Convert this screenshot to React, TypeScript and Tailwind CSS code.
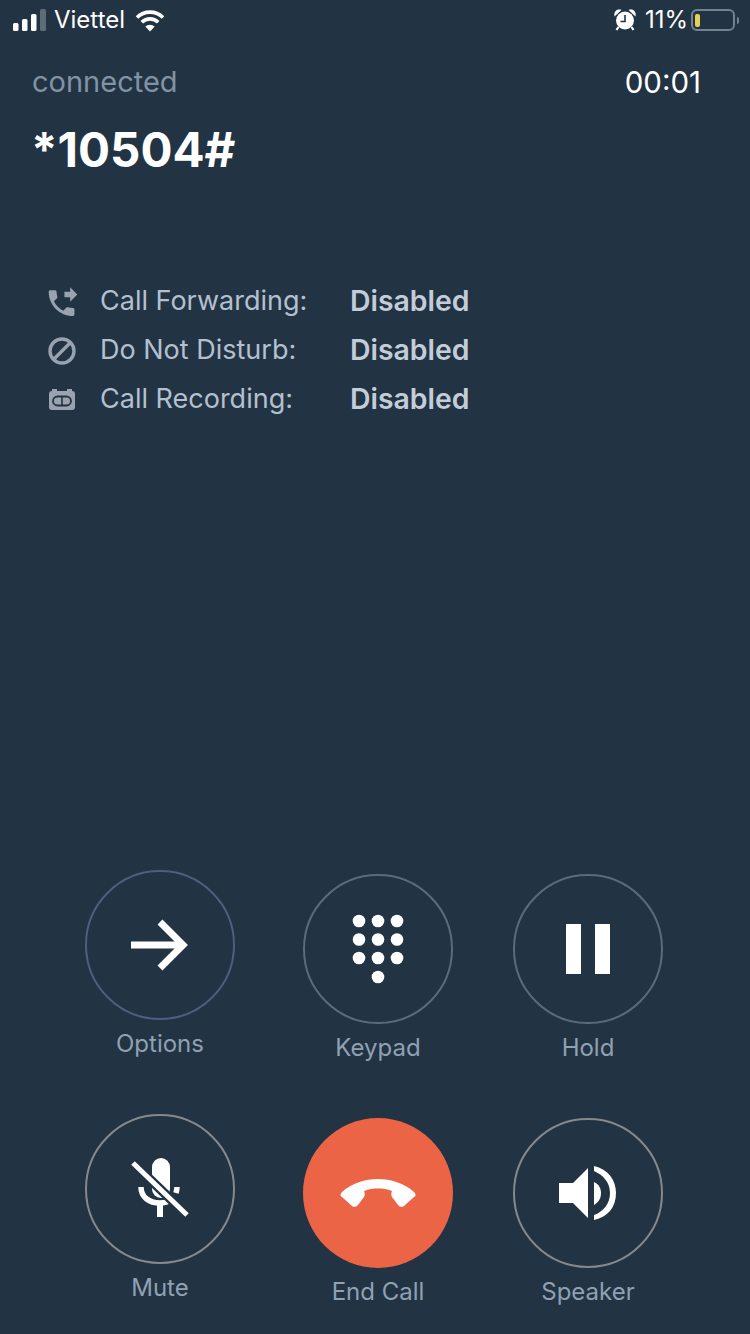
import React from 'react';

const SignalIcon = () => (
  <svg width="34" height="22" viewBox="0 0 34 22" className="shrink-0">
    <rect x="0" y="14" width="5.5" height="8" rx="1.5" fill="#fff" />
    <rect x="9" y="10" width="5.5" height="12" rx="1.5" fill="#fff" />
    <rect x="18" y="5" width="5.5" height="17" rx="1.5" fill="#fff" />
    <rect x="27" y="0" width="6" height="22" rx="1.5" fill="#5e6b78" />
  </svg>
);

const WifiIcon = () => (
  <svg width="30" height="23" viewBox="0 0 30 23" fill="none" className="shrink-0">
    <path d="M2 8.5A18.5 18.5 0 0 1 28 8.5" stroke="#fff" strokeWidth="3.6" />
    <path d="M6.8 13.2A11.8 11.8 0 0 1 23.2 13.2" stroke="#fff" strokeWidth="3.6" />
    <path d="M10.3 17.6A6.8 6.8 0 0 1 19.7 17.6L15 22.5Z" fill="#fff" />
  </svg>
);

const AlarmIcon = () => (
  <svg width="22" height="22" viewBox="0 0 22 22" fill="none" className="shrink-0">
    <path d="M0.5 7.5C-0.5 2.5 3 -0.5 7.5 1Z" fill="#fff" />
    <path d="M21.5 7.5C22.5 2.5 19 -0.5 14.5 1Z" fill="#fff" />
    <path d="M4.5 18L2.5 21M17.5 18L19.5 21" stroke="#fff" strokeWidth="2.2" />
    <circle cx="11" cy="11.5" r="9" fill="#fff" />
    <path d="M11 6V12.5H6.5" stroke="#223343" strokeWidth="1.6" />
  </svg>
);

const BatteryIcon = () => (
  <div className="flex items-center gap-[2px]">
    <div className="flex h-[22px] w-[44px] items-center rounded-[6px] border-2 border-[#75838f] pl-[2px]">
      <div className="h-[13px] w-[5px] rounded-[2px] bg-[#e8cf58]" />
    </div>
    <div className="h-[7px] w-[2px] rounded-r-sm bg-[#75838f]" />
  </div>
);

const ForwardIcon = () => (
  <svg width="30" height="30" viewBox="2.5 1 21 20.5" fill="#98a3af" className="ml-px shrink-0">
    <path d="M18 11l5-5-5-5v3h-4v4h4v3zm2 4.5c-1.25 0-2.45-.2-3.57-.57-.35-.11-.74-.03-1.02.24l-2.2 2.2c-2.83-1.44-5.14-3.75-6.59-6.58l2.2-2.21c.28-.27.36-.66.25-1.01C8.7 6.45 8.5 5.25 8.5 4c0-.55-.45-1-1-1H4c-.55 0-1 .45-1 1 0 9.39 7.61 17 17 17 .55 0 1-.45 1-1v-3.5c0-.55-.45-1-1-1z" />
  </svg>
);

const BlockIcon = () => (
  <svg width="30" height="30" viewBox="0 0 30 30" fill="none" stroke="#98a3af" strokeWidth="3.4" className="shrink-0">
    <circle cx="15" cy="15" r="12" />
    <path d="M7 23L23 7" />
  </svg>
);

const RecordIcon = () => (
  <svg width="30" height="24" viewBox="0 0 30 24" className="shrink-0">
    <path d="M5 1h5v4H5zM20 1h5v4h-5z" fill="#98a3af" />
    <rect x="2" y="3" width="26" height="19" rx="3" fill="#98a3af" />
    <rect x="6" y="8.5" width="18" height="9" rx="4.5" fill="none" stroke="#223343" strokeWidth="1.8" />
    <path d="M15 8.5v9" stroke="#223343" strokeWidth="1.6" />
  </svg>
);

const ArrowIcon = () => (
  <svg width="60" height="56" viewBox="0 0 60 56" fill="none" stroke="#fff" strokeWidth="7">
    <path d="M1 28H54" />
    <path d="M30 5L53 28L30 51" />
  </svg>
);

const KeypadIcon = () => (
  <svg width="52" height="70" viewBox="0 0 52 70" fill="#fff">
    {[7, 25.5, 44].map((cy) =>
      [7, 26, 45].map((cx) => <circle key={`${cx}-${cy}`} cx={cx} cy={cy} r="6.3" />)
    )}
    <circle cx="26" cy="63" r="6.3" />
  </svg>
);

const PauseIcon = () => (
  <div className="flex gap-[14px]">
    <div className="h-[50px] w-[15px] bg-white" />
    <div className="h-[50px] w-[15px] bg-white" />
  </div>
);

const MuteIcon = () => (
  <svg width="60" height="64" viewBox="0 0 60 64" fill="none">
    <path d="M22 10a9 9 0 0 1 18 0V32a9 9 0 0 1-18 0Z" fill="#fff" />
    <path d="M11 30C11 40 19 46 30 46C34 46 38 45 41 43" stroke="#fff" strokeWidth="5.5" />
    <path d="M47 30C47 32 46.5 34 46 36" stroke="#fff" strokeWidth="5.5" />
    <path d="M27 46H33V60H27Z" fill="#fff" />
    <path d="M3 6L57 58" stroke="#223343" strokeWidth="9.5" />
    <path d="M3 6L57 58" stroke="#fff" strokeWidth="5" />
  </svg>
);

const HangupIcon = () => (
  <svg width="76" height="28" viewBox="0 0 76 28" fill="#fff">
    <path d="M2 13C12 4 25 0 38 0C51 0 64 4 74 13C76 15 76 17 74 18L64 27C62 28.5 60 28 58 26L52 18C51 16 51 14 52 12C47 10 43 9.5 38 9.5C33 9.5 29 10 24 12C25 14 25 16 24 18L18 26C16 28 14 28.5 12 27L2 18C0 17 0 15 2 13Z" />
  </svg>
);

const SpeakerIcon = () => (
  <svg width="60" height="56" viewBox="0 0 60 56" fill="#fff">
    <path d="M1 18H15L30 3V53L15 38H1Z" />
    <path d="M36 17C41 19 43 24 43 28C43 33 41 37 36 40Z" />
    <path d="M36 1C50 4 58 15 58 28C58 42 50 52 36 55V50C45 47 52 39 52 28C52 17 45 10 36 6Z" />
  </svg>
);

const infoRows = [
  { icon: <ForwardIcon />, label: 'Call Forwarding:' },
  { icon: <BlockIcon />, label: 'Do Not Disturb:' },
  { icon: <RecordIcon />, label: 'Call Recording:' },
];

const CallButton: React.FC<{ label: string; circle: string; className?: string; children: React.ReactNode }> = ({
  label,
  circle,
  className = '',
  children,
}) => (
  <div className={`flex w-[150px] flex-col items-center ${className}`}>
    <div className={`flex h-[150px] w-[150px] items-center justify-center rounded-full ${circle}`}>{children}</div>
    <span className="mt-2 text-[24px] leading-8 text-[#8fa1b3]">{label}</span>
  </div>
);

const App: React.FC = () => {
  return (
    <div className="flex h-[1334px] w-[750px] flex-col overflow-hidden bg-[#223343] font-['Inter',sans-serif] text-white">
      <div className="flex h-10 items-center pl-[13px] pr-[11px]">
        <SignalIcon />
        <span className="ml-[7px] text-[24px] leading-none">Viettel</span>
        <div className="ml-[10px]">
          <WifiIcon />
        </div>
        <div className="ml-auto">
          <AlarmIcon />
        </div>
        <span className="ml-[9px] text-[24px] leading-none">11%</span>
        <div className="ml-[3px]">
          <BatteryIcon />
        </div>
      </div>

      <div className="mt-[22px] flex h-10 items-center justify-between pl-[32px] pr-[49px]">
        <span className="text-[29px] text-[#8193a5]">connected</span>
        <span className="text-[29.5px]">00:01</span>
      </div>

      <h1 className="mt-5 h-14 pl-[31px] text-[47.5px] font-bold leading-[56px]">*10504#</h1>

      <div className="mt-[99px] pl-[47px]">
        {infoRows.map((row) => (
          <div key={row.label} className="grid h-[49px] grid-cols-[53px_250px_auto] items-center">
            {row.icon}
            <span className="text-[27px] text-[#b3c0cf]">{row.label}</span>
            <span className="text-[28.4px] font-semibold text-[#c3cdd9]">Disabled</span>
          </div>
        ))}
      </div>

      <div className="mt-[446px] grid grid-cols-[218px_210px_150px] gap-y-[50px] pl-[85px]">
        <CallButton label="Options" circle="border-2 border-[#4d5f7d]">
          <ArrowIcon />
        </CallButton>
        <CallButton label="Keypad" circle="border-2 border-[#5a6b80]" className="mt-1">
          <KeypadIcon />
        </CallButton>
        <CallButton label="Hold" circle="border-2 border-[#5a6b80]" className="mt-1">
          <PauseIcon />
        </CallButton>
        <CallButton label="Mute" circle="border-2 border-[#85898d]">
          <MuteIcon />
        </CallButton>
        <CallButton label="End Call" circle="bg-[#ec6446]" className="mt-1">
          <HangupIcon />
        </CallButton>
        <CallButton label="Speaker" circle="border-2 border-[#85898d]" className="mt-1">
          <SpeakerIcon />
        </CallButton>
      </div>
    </div>
  );
};

export default App;
